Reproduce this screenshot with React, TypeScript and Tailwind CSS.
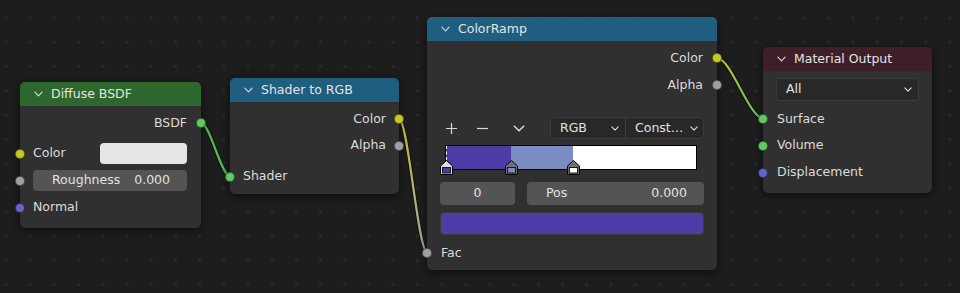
import React from 'react';

// socket fill per data type
const SOCK = {
  shader: 'bg-[#63c763]',
  color: 'bg-[#c7c729]',
  float: 'bg-[#a1a1a1]',
  vector: 'bg-[#6363c7]',
};

function Chevron({ className }: { className?: string }) {
  return (
    <svg viewBox="0 0 10 6" className={className} fill="none" stroke="currentColor" strokeWidth="1.3" strokeLinecap="round" strokeLinejoin="round">
      <path d="M1 1l4 4 4-4" />
    </svg>
  );
}

function Socket({ type, side }: { type: keyof typeof SOCK; side: 'left' | 'right' }) {
  const pos = side === 'left' ? '-left-[5px]' : '-right-[5px]';
  return (
    <span className={`absolute top-1/2 -translate-y-1/2 ${pos} w-[10px] h-[10px] rounded-full border border-black/50 ${SOCK[type]}`} />
  );
}

function Node({
  title,
  header,
  className,
  children,
}: {
  title: string;
  header: string;
  className: string;
  children: React.ReactNode;
}) {
  return (
    <div className={`absolute rounded-[5px] bg-[#303030] shadow-[0_2px_8px_rgba(0,0,0,0.6)] ${className}`}>
      <div className={`h-[24px] flex items-center pl-[14px] rounded-t-[5px] ${header}`}>
        <Chevron className="w-[9px] h-[6px] text-[#d6d6d6]" />
        <span className="ml-[8px] text-[12.5px] text-[#e4e4e4] leading-none">{title}</span>
      </div>
      {children}
    </div>
  );
}

function Row({ className, children }: { className?: string; children: React.ReactNode }) {
  return <div className={`relative flex items-center ${className ?? ''}`}>{children}</div>;
}

function Marker({ x, fill, active }: { x: number; fill: string; active?: boolean }) {
  return (
    <svg width="13" height="15" viewBox="0 0 13 15" className="absolute top-[14px]" style={{ left: x - 6.5 }}>
      <path d="M6.5 0.5 L12.5 6 L12.5 14.5 L0.5 14.5 L0.5 6 Z" fill={active ? '#dcdcdc' : '#6f6f6f'} stroke="#000" />
      <rect x="2.5" y="7.5" width="8" height="5.5" fill={fill} stroke="#1b1b1b" />
    </svg>
  );
}

function Links() {
  return (
    <svg className="absolute inset-0" width="960" height="293">
      <defs>
        <pattern id="dots" x="4.5" y="16.5" width="24.2" height="24.25" patternUnits="userSpaceOnUse">
          <rect width="3" height="3" fill="#282828" />
        </pattern>
        <linearGradient id="l2" gradientUnits="userSpaceOnUse" x1="399" y1="119" x2="427" y2="252">
          <stop offset="0" stopColor="#c4c437" />
          <stop offset="1" stopColor="#a3a3a3" />
        </linearGradient>
        <linearGradient id="l3" gradientUnits="userSpaceOnUse" x1="717" y1="58" x2="763" y2="118">
          <stop offset="0" stopColor="#c4c437" />
          <stop offset="1" stopColor="#5cc25c" />
        </linearGradient>
      </defs>
      <rect width="960" height="293" fill="url(#dots)" />
      <g fill="none" strokeLinecap="round">
        <path d="M201 123 C210 123 221 176 230 176" stroke="rgba(0,0,0,0.55)" strokeWidth="4" />
        <path d="M201 123 C210 123 221 176 230 176" stroke="#55b955" strokeWidth="2.2" />
        <path d="M399 119 C408 119 418 252 427 252" stroke="rgba(0,0,0,0.55)" strokeWidth="4" />
        <path d="M399 119 C408 119 418 252 427 252" stroke="url(#l2)" strokeWidth="2.2" />
        <path d="M717 58 C731 58 749 118 763 118" stroke="rgba(0,0,0,0.55)" strokeWidth="4" />
        <path d="M717 58 C731 58 749 118 763 118" stroke="url(#l3)" strokeWidth="2.2" />
      </g>
    </svg>
  );
}

export default function App() {
  return (
    <div className="relative w-[960px] h-[293px] overflow-hidden bg-[#1d1d1d] font-['DejaVu_Sans',sans-serif] text-[12.5px] text-[#dcdcdc]">
      <Links />

      {/* Diffuse BSDF */}
      <Node title="Diffuse BSDF" header="bg-[#2d672d]" className="left-[20px] top-[82px] w-[181px]">
        <div className="pt-[4px] pb-[7px]">
          <Row className="h-[26px] justify-end pr-[14px]">
            <span>BSDF</span>
            <Socket type="shader" side="right" />
          </Row>
          <div className="h-[4px]" />
          <Row className="h-[27px] pl-[13px] pr-[14px]">
            <Socket type="color" side="left" />
            <span>Color</span>
            <div className="ml-auto w-[87px] h-[21px] rounded-[4px] bg-[#e6e6e6]" />
          </Row>
          <Row className="h-[27px] pl-[13px] pr-[14px]">
            <Socket type="float" side="left" />
            <div className="w-full h-[21px] rounded-[4px] bg-[#545454] flex items-center justify-between pl-[19px] pr-[17px] text-[#e2e2e2]">
              <span>Roughness</span>
              <span>0.000</span>
            </div>
          </Row>
          <Row className="h-[27px] pl-[13px]">
            <Socket type="vector" side="left" />
            <span>Normal</span>
          </Row>
        </div>
      </Node>

      {/* Shader to RGB */}
      <Node title="Shader to RGB" header="bg-[#1f5e7e]" className="left-[230px] top-[78px] w-[169px]">
        <div className="pt-[4px] pb-[4px]">
          <Row className="h-[26px] justify-end pr-[13px]">
            <span>Color</span>
            <Socket type="color" side="right" />
          </Row>
          <Row className="h-[27px] justify-end pr-[13px]">
            <span>Alpha</span>
            <Socket type="float" side="right" />
          </Row>
          <div className="h-[4px]" />
          <Row className="h-[27px] pl-[13px]">
            <Socket type="shader" side="left" />
            <span>Shader</span>
          </Row>
        </div>
      </Node>

      {/* ColorRamp */}
      <Node title="ColorRamp" header="bg-[#1f5e7e]" className="left-[427px] top-[17px] w-[290px]">
        <div className="pt-[4px] pb-[4px]">
          <Row className="h-[26px] justify-end pr-[14px]">
            <span>Color</span>
            <Socket type="color" side="right" />
          </Row>
          <Row className="h-[28px] justify-end pr-[14px]">
            <span>Alpha</span>
            <Socket type="float" side="right" />
          </Row>
          <div className="h-[18px]" />
          <Row className="h-[22px] pl-[19px] pr-[13px] text-[#d8d8d8]">
            <svg viewBox="0 0 11 11" className="w-[11px] h-[11px]" stroke="currentColor" strokeWidth="1.2">
              <path d="M5.5 0v11M0 5.5h11" />
            </svg>
            <svg viewBox="0 0 11 11" className="ml-[20px] w-[11px] h-[11px]" stroke="currentColor" strokeWidth="1.2">
              <path d="M0 5.5h11" />
            </svg>
            <Chevron className="ml-[25px] w-[12px] h-[7px]" />
            <div className="ml-auto flex h-[22px] rounded-[4px] border border-[#3b3b3b] bg-[#282828] text-[#e2e2e2]">
              <div className="w-[75px] flex items-center pl-[9px] pr-[6px] border-r border-[#3b3b3b]">
                <span>RGB</span>
                <Chevron className="ml-auto w-[8px] h-[5px]" />
              </div>
              <div className="w-[77px] flex items-center pl-[9px] pr-[5px]">
                <span>Const…</span>
                <Chevron className="ml-auto w-[8px] h-[5px]" />
              </div>
            </div>
          </Row>
          <div className="relative mt-[6px] ml-[18px] w-[252px] h-[25px] flex border border-black">
            <div className="w-[65px] bg-[#4f3ba6]" />
            <div className="w-[62px] bg-[#7a8cc2]" />
            <div className="flex-1 bg-white" />
            <div className="absolute left-0 top-0 h-[14px] border-l border-dashed border-white" />
            <Marker x={0} fill="#4f3ba6" active />
            <Marker x={65} fill="#7a8cc2" />
            <Marker x={127} fill="#ffffff" />
          </div>
          <div className="mt-[12px] px-[13px] flex gap-[12px] h-[23px] text-[#e2e2e2]">
            <div className="w-[75px] rounded-[4px] bg-[#545454] flex items-center justify-center">0</div>
            <div className="flex-1 rounded-[4px] bg-[#545454] flex items-center justify-between pl-[19px] pr-[17px]">
              <span>Pos</span>
              <span>0.000</span>
            </div>
          </div>
          <div className="mt-[7px] mx-[13px] h-[23px] rounded-[4px] bg-[#4f3ca6] border border-[#3a3a3a]" />
          <Row className="mt-[5px] h-[26px] pl-[14px]">
            <Socket type="float" side="left" />
            <span>Fac</span>
          </Row>
        </div>
      </Node>

      {/* Material Output */}
      <Node title="Material Output" header="bg-[#3e1e27]" className="left-[763px] top-[47px] w-[169px]">
        <div className="pt-[7px] pb-[7px]">
          <div className="mx-[13px] h-[23px] rounded-[4px] border border-[#3b3b3b] bg-[#282828] flex items-center pl-[9px] pr-[6px] text-[#e2e2e2]">
            <span>All</span>
            <Chevron className="ml-auto w-[8px] h-[5px]" />
          </div>
          <Row className="mt-[5px] h-[26px] pl-[14px]">
            <Socket type="shader" side="left" />
            <span>Surface</span>
          </Row>
          <Row className="h-[27px] pl-[14px]">
            <Socket type="shader" side="left" />
            <span>Volume</span>
          </Row>
          <Row className="h-[27px] pl-[14px]">
            <Socket type="vector" side="left" />
            <span>Displacement</span>
          </Row>
        </div>
      </Node>
    </div>
  );
}
